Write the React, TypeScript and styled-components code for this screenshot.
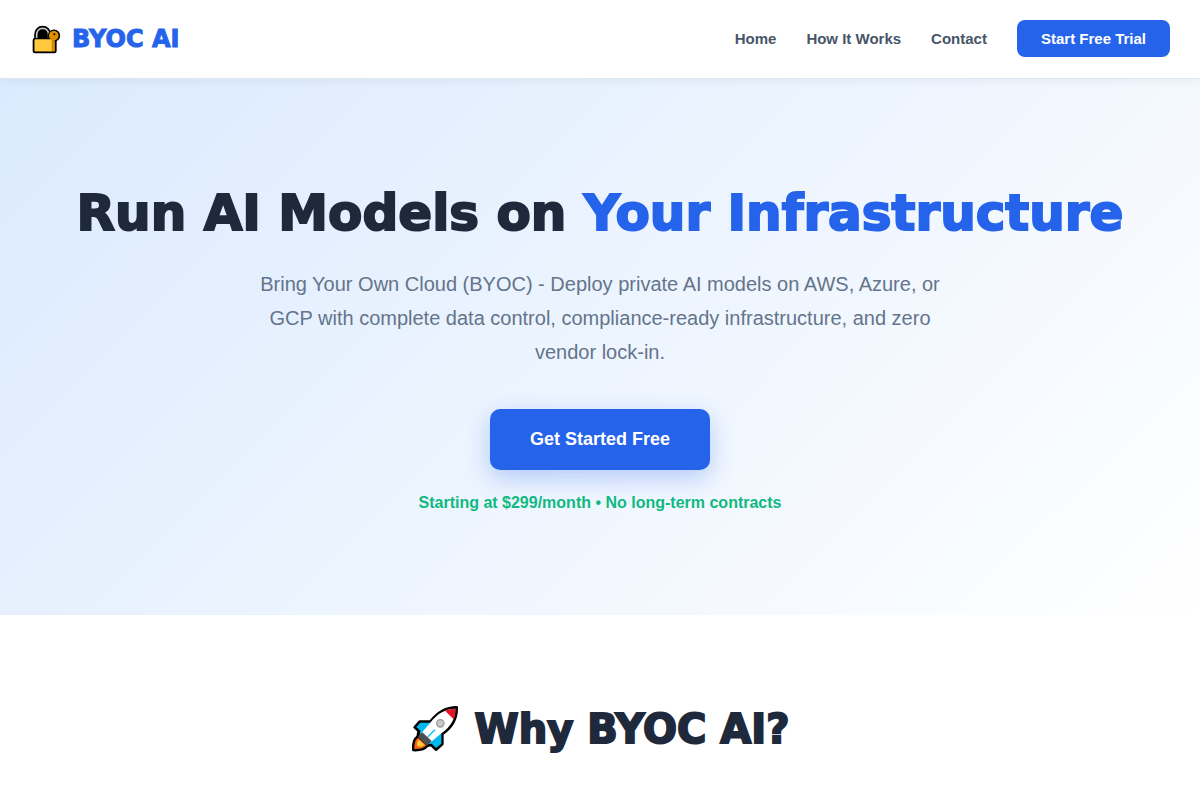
import React from "react";
import styled, { createGlobalStyle } from "styled-components";

const sans = `"Liberation Sans", Arial, sans-serif`;
const display = `"Arial Black", "DejaVu Sans", sans-serif`;

const GlobalStyle = createGlobalStyle`
  *, *::before, *::after { box-sizing: border-box; }
  body {
    margin: 0;
    background: #ffffff;
    color: #1e293b;
    font-family: ${sans};
  }
`;

const Header = styled.header`
  position: relative;
  display: flex;
  align-items: flex-start;
  justify-content: space-between;
  padding: 20px 30px;
  background: #ffffff;
  border-bottom: 1px solid #e2e8f0;
  box-shadow: 0 2px 10px rgba(0, 0, 0, 0.05);
`;

const Logo = styled.a`
  display: flex;
  align-items: center;
  gap: 10px;
  padding-left: 2px;
  color: #2563eb;
  font-family: ${display};
  font-size: 24px;
  font-weight: 900;
  line-height: 38px;
  text-decoration: none;
  -webkit-text-stroke: 1px currentColor;
`;

const Nav = styled.nav`
  display: flex;
  align-items: center;
  gap: 30px;
`;

const NavLink = styled.a`
  color: #475569;
  font-size: 15px;
  font-weight: 600;
  line-height: 17px;
  text-decoration: none;
`;

const TrialButton = styled.button`
  padding: 10px 24px;
  border: 0;
  border-radius: 8px;
  background: #2563eb;
  color: #ffffff;
  font-family: ${sans};
  font-size: 15px;
  font-weight: 600;
  line-height: 17px;
`;

const Hero = styled.section`
  display: flex;
  flex-direction: column;
  align-items: center;
  padding: 100px 30px;
  background: linear-gradient(135deg, #dbeafe 0%, #ffffff 100%);
  text-align: center;
`;

const HeroTitle = styled.h1`
  margin: 0 0 20px;
  font-family: ${display};
  font-size: 50px;
  font-weight: 900;
  line-height: 68px;
  -webkit-text-stroke: 2px currentColor;
`;

const Accent = styled.span`
  color: #2563eb;
`;

const Lead = styled.p`
  max-width: 700px;
  margin: 0 0 40px;
  color: #64748b;
  font-size: 20px;
  line-height: 34px;
`;

const CtaButton = styled.button`
  padding: 20px 40px;
  border: 0;
  border-radius: 10px;
  background: #2563eb;
  box-shadow: 0 8px 24px rgba(37, 99, 235, 0.3);
  color: #ffffff;
  font-family: ${sans};
  font-size: 18px;
  font-weight: 600;
  line-height: 21px;
`;

const PriceNote = styled.p`
  margin: 20px 0 0;
  color: #10b981;
  font-size: 16px;
  font-weight: 600;
  line-height: 25px;
`;

const Why = styled.section`
  padding: 80px 30px 40px;
`;

const WhyTitle = styled.h2`
  display: flex;
  align-items: center;
  justify-content: center;
  gap: 16px;
  margin: 0;
  font-family: ${display};
  font-size: 40px;
  font-weight: 900;
  line-height: 68px;
  -webkit-text-stroke: 2px currentColor;
`;

const LockIcon = () => (
  <svg width="30" height="30" viewBox="12 12 90 90" aria-hidden="true">
    <path d="M21 58V44C21 29 31 20 44 20S67 29 67 44V58Z" fill="#000" stroke="#000" strokeWidth="5" />
    <path d="M26 55V45C26 32 34 25 44 25S62 32 62 45V55" fill="none" stroke="#c4c8cc" strokeWidth="5" />
    <rect x="17" y="57" width="66" height="40" rx="4" fill="#ffc83d" stroke="#000" strokeWidth="6" />
    <circle cx="78" cy="47" r="16" fill="#e08f00" stroke="#000" strokeWidth="5" />
    <path d="M68 56H80V92Q80 94 78 94H68Z" fill="#d68a00" />
    <rect x="20" y="58" width="51" height="36" rx="2" fill="#ffc83d" />
    <circle cx="77" cy="47" r="14" fill="#e08f00" />
    <circle cx="79" cy="43" r="3" fill="#000" />
  </svg>
);

const RocketIcon = () => (
  <svg width="48" height="48" viewBox="18 15 144 144" aria-hidden="true">
    <path
      d="M155 22C124 22 98 36 76 65H44L29 82L41 93L38 110C24 119 24 135 25 150C42 151 57 150 67 137L79 135L93 149L112 132V102C142 82 156 57 155 22Z"
      fill="#000"
      stroke="#000"
      strokeWidth="8"
      strokeLinejoin="round"
    />
    <path d="M80 68H46L34 81L46 92L44 108L60 100Z" fill="#00b8f0" />
    <path d="M109 96V131L93 144L80 131L68 133Z" fill="#00b8f0" />
    <path d="M151 26C119 27 97 41 77 67L50 98L78 126L109 100C139 78 151 56 151 26Z" fill="#fff" />
    <path d="M151 26C140 26 130 28 120 32L146 58C150 48 151 38 151 26Z" fill="#e81224" />
    <path d="M44 105L52 97L80 123L70 133L66 137L39 111Z" fill="#4b4f54" />
    <path d="M39 113C29 121 28 134 28 147C42 147 55 147 64 136Z" fill="#f7630c" />
    <path d="M42 119L58 134C53 140 46 142 38 139C34 132 37 123 42 119Z" fill="#ffc83d" />
    <path d="M68 111L90 89" stroke="#00c0f5" strokeWidth="4" />
    <circle cx="106" cy="70" r="11" fill="#c9c9c9" stroke="#9b9b9b" strokeWidth="4" />
  </svg>
);

export default function App() {
  return (
    <>
      <GlobalStyle />
      <Header>
        <Logo href="#">
          <LockIcon />
          BYOC AI
        </Logo>
        <Nav>
          <NavLink href="#home">Home</NavLink>
          <NavLink href="#how">How It Works</NavLink>
          <NavLink href="#contact">Contact</NavLink>
          <TrialButton type="button">Start Free Trial</TrialButton>
        </Nav>
      </Header>
      <main>
        <Hero>
          <HeroTitle>
            Run AI Models on <Accent>Your Infrastructure</Accent>
          </HeroTitle>
          <Lead>
            Bring Your Own Cloud (BYOC) - Deploy private AI models on AWS, Azure, or GCP with
            complete data control, compliance-ready infrastructure, and zero vendor lock-in.
          </Lead>
          <CtaButton type="button">Get Started Free</CtaButton>
          <PriceNote>Starting at $299/month • No long-term contracts</PriceNote>
        </Hero>
        <Why>
          <WhyTitle>
            <RocketIcon />
            Why BYOC AI?
          </WhyTitle>
        </Why>
      </main>
    </>
  );
}
